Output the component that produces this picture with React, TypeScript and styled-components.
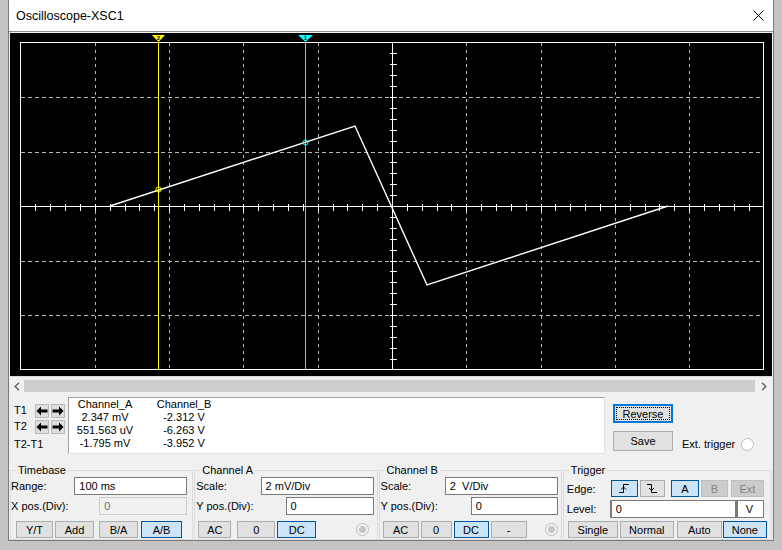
import React from 'react';
import styled, { createGlobalStyle, css } from 'styled-components';

const GlobalStyle = createGlobalStyle`
  html, body { margin: 0; padding: 0; background: #c4c4c4; }
  body { font-family: "Liberation Sans", Arial, sans-serif; font-size: 11px; color: #000; }
  * { box-sizing: border-box; }
`;

const Window = styled.div`
  margin-left: 8px;
  width: 766px;
  height: 541px;
  background: #f0f0f0;
  border: 1px solid #7a7a7a;
  border-top: none;
  display: flex;
  flex-direction: column;
`;

const TitleBar = styled.div`
  height: 32px;
  background: #fff;
  border-bottom: 1px solid #8c8c8c;
  display: flex;
  align-items: center;
  padding-left: 7px;
  padding-right: 9px;
`;

const TitleText = styled.div`
  flex: 1;
  font-size: 12.5px;
  color: #000;
`;

const Content = styled.div`
  flex: 1;
  padding: 1px 1px 0 1px;
  display: flex;
  flex-direction: column;
`;

const Screen = styled.div`
  width: 762px;
  height: 344px;
  background: #000;
  border-bottom: 1px solid #d8d8d8;
  display: flex;
`;

const ScrollBar = styled.div`
  margin-top: 3px;
  height: 12px;
  display: flex;
  align-items: stretch;
`;

const ScrollArrow = styled.div<{ $w: number }>`
  width: ${(p) => p.$w}px;
  display: flex;
  align-items: center;
  justify-content: center;
`;

const ScrollTrack = styled.div`
  flex: 1;
  background: #cdcdcd;
`;

const InfoRow = styled.div`
  height: 65px;
  display: flex;
  align-items: flex-start;
`;

const TPanel = styled.div`
  width: 58px;
  padding: 11px 0 0 4px;
  display: grid;
  grid-template-columns: 19px 14px 14px;
  grid-template-rows: 15px 15px 18px;
  column-gap: 2px;
  row-gap: 1px;
  align-items: center;
`;

const TLabel = styled.div<{ $span?: boolean }>`
  ${(p) =>
    p.$span &&
    css`
      grid-column: 1 / span 3;
    `}
  line-height: 13px;
`;

const ArrowBtn = styled.div`
  width: 14px;
  height: 14px;
  background: #dedede;
  border: 1px solid #b9b9b9;
  display: flex;
  align-items: center;
  justify-content: center;
`;

const Readout = styled.div`
  margin-top: 5px;
  width: 537px;
  height: 57px;
  background: #fff;
  border-top: 1px solid #a0a0a0;
  border-left: 1px solid #a0a0a0;
  border-right: 1px solid #e3e3e3;
  border-bottom: 1px solid #e3e3e3;
  padding-left: 1px;
  display: flex;
  gap: 9px;
`;

const ReadoutCol = styled.div`
  width: 70px;
  display: flex;
  flex-direction: column;
  text-align: center;
  line-height: 13px;
`;

const SideCol = styled.div`
  padding-left: 8px;
  display: flex;
  flex-direction: column;
`;

const PushBtn = styled.div<{ $focused?: boolean; $h: number; $mt: number }>`
  width: 60px;
  height: ${(p) => p.$h}px;
  margin-top: ${(p) => p.$mt}px;
  background: #e1e1e1;
  border: 1px solid #adadad;
  display: flex;
  align-items: center;
  justify-content: center;
  ${(p) =>
    p.$focused &&
    css`
      border: 2px solid #0078d7;
      outline: 1px dotted #000;
      outline-offset: -4px;
    `}
`;

const SaveRow = styled.div`
  display: flex;
  align-items: flex-start;
`;

const ExtTrigger = styled.div`
  margin-top: 14px;
  margin-left: 9px;
  display: flex;
  align-items: center;
  gap: 6px;
  line-height: 14px;
`;

const RadioCircle = styled.div<{ $disabled?: boolean }>`
  width: 13px;
  height: 13px;
  border-radius: 50%;
  border: 1px solid #bcbcbc;
  background: #fff;
  display: flex;
  align-items: center;
  justify-content: center;
  ${(p) =>
    p.$disabled &&
    css`
      background: #f4f4f4;
      &::after {
        content: '';
        width: 7px;
        height: 7px;
        border-radius: 50%;
        background: #c6c6c6;
      }
    `}
`;

const GroupsRow = styled.div`
  margin-top: 6px;
  display: flex;
  gap: 1px;
`;

const Group = styled.fieldset<{ $w: number }>`
  width: ${(p) => p.$w}px;
  height: 77px;
  margin: 0;
  padding: 0;
  min-width: 0;
  border: 1px solid #dcdcdc;
  display: flex;
  flex-direction: column;
`;

const Legend = styled.legend`
  margin-left: 5px;
  padding: 0 2px;
  line-height: 14px;
  font-size: 11px;
`;

const FieldRow = styled.div<{ $mt: number; $h: number; $pl?: number }>`
  margin-top: ${(p) => p.$mt}px;
  height: ${(p) => p.$h}px;
  padding-left: ${(p) => p.$pl ?? 0}px;
  display: flex;
  align-items: center;
`;

const FieldLabel = styled.div<{ $w?: number }>`
  ${(p) => (p.$w ? `width: ${p.$w}px;` : 'flex: 1;')}
  white-space: nowrap;
`;

const TextBox = styled.div<{ $w?: number; $mr?: number; $disabled?: boolean }>`
  ${(p) => (p.$w ? `width: ${p.$w}px;` : 'flex: 1;')}
  margin-right: ${(p) => p.$mr ?? 0}px;
  height: 100%;
  background: #fff;
  border: 1px solid #7a7a7a;
  padding-left: 4px;
  display: flex;
  align-items: center;
  white-space: pre;
  ${(p) =>
    p.$disabled &&
    css`
      background: #f0f0f0;
      border-color: #cccccc;
      color: #6d6d6d;
    `}
`;

const UnitBox = styled.div`
  width: 28px;
  height: 100%;
  background: #fff;
  border: 1px solid #7a7a7a;
  border-left-width: 2px;
  padding-left: 8px;
  display: flex;
  align-items: center;
`;

const LevelWrap = styled.div`
  width: 154px;
  height: 100%;
  display: flex;
  border-left: 1px solid #7a7a7a;
`;

type BtnKind = 'normal' | 'active' | 'disabled';

const Btn = styled.div<{ $w: number; $ml?: number; $kind?: BtnKind }>`
  width: ${(p) => p.$w}px;
  margin-left: ${(p) => p.$ml ?? 0}px;
  height: 100%;
  background: #e1e1e1;
  border: 1px solid #adadad;
  display: flex;
  align-items: center;
  justify-content: center;
  ${(p) =>
    p.$kind === 'active' &&
    css`
      background: #cce4f7;
      border-color: #005499;
    `}
  ${(p) =>
    p.$kind === 'disabled' &&
    css`
      background: #cccccc;
      border-color: #bfbfbf;
      color: #838383;
    `}
`;

const Spacer = styled.div`
  flex: 1;
`;

const LeftArrow = () => (
  <svg width="12" height="12" viewBox="0 0 12 12">
    <polygon points="0.5,6 5,1.5 5,4.5 11.5,4.5 11.5,7.5 5,7.5 5,10.5" fill="#000" />
  </svg>
);

const RightArrow = () => (
  <svg width="12" height="12" viewBox="0 0 12 12">
    <polygon points="11.5,6 7,1.5 7,4.5 0.5,4.5 0.5,7.5 7,7.5 7,10.5" fill="#000" />
  </svg>
);

const RiseIcon = () => (
  <svg width="12" height="11" viewBox="0 0 12 11">
    <path d="M1 9.5 H5.5 V1.5 H11" stroke="#000" strokeWidth="1" fill="none" />
    <path d="M3 6.5 L5.5 4 L8 6.5" stroke="#000" strokeWidth="1" fill="none" />
  </svg>
);

const FallIcon = () => (
  <svg width="12" height="11" viewBox="0 0 12 11">
    <path d="M1 1.5 H5.5 V9.5 H11" stroke="#000" strokeWidth="1" fill="none" />
    <path d="M3 5 L5.5 7.5 L8 5" stroke="#000" strokeWidth="1" fill="none" />
  </svg>
);

const CloseIcon = () => (
  <svg width="11" height="11" viewBox="0 0 11 11">
    <path d="M0.5 0.5 L10.5 10.5 M10.5 0.5 L0.5 10.5" stroke="#000" strokeWidth="1" fill="none" />
  </svg>
);

const Chevron = ({ dir }: { dir: 'l' | 'r' }) => (
  <svg width="6" height="9" viewBox="0 0 6 9">
    <path
      d={dir === 'l' ? 'M5 0.8 L1.2 4.5 L5 8.2' : 'M1 0.8 L4.8 4.5 L1 8.2'}
      stroke="#606060"
      strokeWidth="1.4"
      fill="none"
    />
  </svg>
);

const ScopeDisplay = () => {
  const X0 = 10.5,
    X1 = 753.5,
    Y0 = 9.5,
    Y1 = 336.5;
  const dx = (X1 - X0) / 10;
  const dy = (Y1 - Y0) / 6;
  const cx = Math.round(X0 + 5 * dx) + 0.5;
  const cy = Math.round(Y0 + 3 * dy) + 0.5;
  const vLines = [1, 2, 3, 4, 6, 7, 8, 9].map((i) => Math.round(X0 + i * dx) + 0.5);
  const hLines = [1, 2, 4, 5].map((j) => Math.round(Y0 + j * dy) + 0.5);
  const hTicks = Array.from({ length: 49 }, (_, k) => Math.round(X0 + (k + 1) * (dx / 5)) + 0.5);
  const vTicks = Array.from({ length: 29 }, (_, k) => Math.round(Y0 + (k + 1) * (dy / 5)) + 0.5);
  const c2 = 148.5;
  const c1 = 295.5;
  return (
    <svg width="762" height="344" viewBox="0 0 762 344">
      <g shapeRendering="crispEdges">
        {vLines.map((x) => (
          <line key={'v' + x} x1={x} y1={Y0} x2={x} y2={Y1} stroke="#b8b8b8" strokeDasharray="3 4" />
        ))}
        {hLines.map((y) => (
          <line key={'h' + y} x1={X0} y1={y} x2={X1} y2={y} stroke="#b8b8b8" strokeDasharray="4 3" />
        ))}
        <rect x={X0} y={Y0} width={X1 - X0} height={Y1 - Y0} fill="none" stroke="#fff" />
        <line x1={X0} y1={cy} x2={X1} y2={cy} stroke="#fff" />
        <line x1={cx} y1={Y0} x2={cx} y2={Y1} stroke="#fff" />
        {hTicks.map((x) => (
          <line key={'ht' + x} x1={x} y1={cy - 3} x2={x} y2={cy + 4} stroke="#fff" />
        ))}
        {vTicks.map((y) => (
          <line key={'vt' + y} x1={cx - 3} y1={y} x2={cx + 4} y2={y} stroke="#fff" />
        ))}
        <line x1={c2} y1={9} x2={c2} y2={Y1} stroke="#ffff00" />
        <line x1={c1} y1={9} x2={c1} y2={Y1} stroke="#00ffff" />
      </g>
      <polyline
        points="100,173 345,93 417,252 658,173"
        fill="none"
        stroke="#fff"
        strokeWidth="1.4"
      />
      <polygon points={`${c2 - 6.5},2 ${c2 + 6.5},2 ${c2},9`} fill="#ffff00" />
      <text x={c2} y={7} fontSize="6" fontWeight="bold" textAnchor="middle" fill="#000" fontFamily="Liberation Sans, Arial, sans-serif">
        2
      </text>
      <polygon points={`${c1 - 7.5},2 ${c1 + 7.5},2 ${c1},9`} fill="#00ffff" />
      <text x={c1} y={7} fontSize="6" fontWeight="bold" textAnchor="middle" fill="#000" fontFamily="Liberation Sans, Arial, sans-serif">
        1
      </text>
      <circle cx={c2} cy={156.5} r={2.6} fill="none" stroke="#ffff00" strokeWidth="1" />
      <circle cx={c1} cy={109.5} r={2.6} fill="none" stroke="#00ffff" strokeWidth="1" />
    </svg>
  );
};

export default function App() {
  return (
    <>
      <GlobalStyle />
      <Window>
        <TitleBar>
          <TitleText>Oscilloscope-XSC1</TitleText>
          <CloseIcon />
        </TitleBar>
        <Content>
          <Screen>
            <ScopeDisplay />
          </Screen>
          <ScrollBar>
            <ScrollArrow $w={14}>
              <Chevron dir="l" />
            </ScrollArrow>
            <ScrollTrack />
            <ScrollArrow $w={17}>
              <Chevron dir="r" />
            </ScrollArrow>
          </ScrollBar>
          <InfoRow>
            <TPanel>
              <TLabel>T1</TLabel>
              <ArrowBtn>
                <LeftArrow />
              </ArrowBtn>
              <ArrowBtn>
                <RightArrow />
              </ArrowBtn>
              <TLabel>T2</TLabel>
              <ArrowBtn>
                <LeftArrow />
              </ArrowBtn>
              <ArrowBtn>
                <RightArrow />
              </ArrowBtn>
              <TLabel $span>T2-T1</TLabel>
            </TPanel>
            <Readout>
              <ReadoutCol>
                <span>Channel_A</span>
                <span>2.347 mV</span>
                <span>551.563 uV</span>
                <span>-1.795 mV</span>
              </ReadoutCol>
              <ReadoutCol>
                <span>Channel_B</span>
                <span>-2.312 V</span>
                <span>-6.263 V</span>
                <span>-3.952 V</span>
              </ReadoutCol>
            </Readout>
            <SideCol>
              <PushBtn $focused $h={19} $mt={12}>
                Reverse
              </PushBtn>
              <SaveRow>
                <PushBtn $h={20} $mt={8}>
                  Save
                </PushBtn>
                <ExtTrigger>
                  <span>Ext. trigger</span>
                  <RadioCircle />
                </ExtTrigger>
              </SaveRow>
            </SideCol>
          </InfoRow>
          <GroupsRow>
            <Group $w={184}>
              <Legend>Timebase</Legend>
              <FieldRow $mt={0} $h={18}>
                <FieldLabel>Range:</FieldLabel>
                <TextBox $w={113} $mr={5}>100 ms</TextBox>
              </FieldRow>
              <FieldRow $mt={2} $h={18}>
                <FieldLabel>X pos.(Div):</FieldLabel>
                <TextBox $w={88} $mr={5} $disabled>
                  0
                </TextBox>
              </FieldRow>
              <FieldRow $mt={6} $h={17} $pl={5}>
                <Btn $w={37}>Y/T</Btn>
                <Btn $w={39} $ml={2}>
                  Add
                </Btn>
                <Btn $w={39} $ml={5}>
                  B/A
                </Btn>
                <Btn $w={41} $ml={3} $kind="active">
                  A/B
                </Btn>
              </FieldRow>
            </Group>
            <Group $w={184}>
              <Legend>Channel A</Legend>
              <FieldRow $mt={0} $h={18} $pl={1}>
                <FieldLabel>Scale:</FieldLabel>
                <TextBox $w={113} $mr={3}>2 mV/Div</TextBox>
              </FieldRow>
              <FieldRow $mt={2} $h={18} $pl={1}>
                <FieldLabel>Y pos.(Div):</FieldLabel>
                <TextBox $w={88} $mr={3}>0</TextBox>
              </FieldRow>
              <FieldRow $mt={6} $h={17} $pl={3}>
                <Btn $w={33}>AC</Btn>
                <Btn $w={38} $ml={6}>
                  0
                </Btn>
                <Btn $w={39} $ml={2} $kind="active">
                  DC
                </Btn>
                <Spacer />
                <RadioCircle $disabled style={{ marginRight: 8 }} />
              </FieldRow>
            </Group>
            <Group $w={184}>
              <Legend>Channel B</Legend>
              <FieldRow $mt={0} $h={18} $pl={1}>
                <FieldLabel>Scale:</FieldLabel>
                <TextBox $w={113} $mr={3}>2  V/Div</TextBox>
              </FieldRow>
              <FieldRow $mt={2} $h={18} $pl={1}>
                <FieldLabel>Y pos.(Div):</FieldLabel>
                <TextBox $w={87} $mr={3}>0</TextBox>
              </FieldRow>
              <FieldRow $mt={6} $h={17} $pl={3}>
                <Btn $w={36}>AC</Btn>
                <Btn $w={31} $ml={2}>
                  0
                </Btn>
                <Btn $w={35} $ml={2} $kind="active">
                  DC
                </Btn>
                <Btn $w={36} $ml={2}>
                  -
                </Btn>
                <Spacer />
                <RadioCircle $disabled style={{ marginRight: 3 }} />
              </FieldRow>
            </Group>
            <Group $w={210}>
              <Legend>Trigger</Legend>
              <FieldRow $mt={3} $h={17} $pl={3}>
                <FieldLabel $w={44}>Edge:</FieldLabel>
                <Btn $w={27} $kind="active">
                  <RiseIcon />
                </Btn>
                <Btn $w={25} $ml={2}>
                  <FallIcon />
                </Btn>
                <Btn $w={28} $ml={6} $kind="active">
                  A
                </Btn>
                <Btn $w={27} $ml={2} $kind="disabled">
                  B
                </Btn>
                <Btn $w={33} $ml={3} $kind="disabled">
                  Ext
                </Btn>
              </FieldRow>
              <FieldRow $mt={3} $h={18} $pl={3}>
                <FieldLabel $w={43}>Level:</FieldLabel>
                <LevelWrap>
                  <TextBox>0</TextBox>
                  <UnitBox>V</UnitBox>
                </LevelWrap>
              </FieldRow>
              <FieldRow $mt={3} $h={17} $pl={4}>
                <Btn $w={50}>Single</Btn>
                <Btn $w={54} $ml={2}>
                  Normal
                </Btn>
                <Btn $w={45} $ml={3}>
                  Auto
                </Btn>
                <Btn $w={44} $ml={1} $kind="active">
                  None
                </Btn>
              </FieldRow>
            </Group>
          </GroupsRow>
        </Content>
      </Window>
    </>
  );
}
